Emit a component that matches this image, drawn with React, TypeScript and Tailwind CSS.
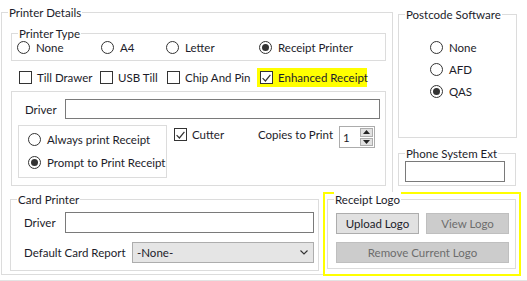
import React from 'react';

const Group: React.FC<{ title?: string; className?: string; children?: React.ReactNode }> = ({ title, className = '', children }) => (
  <div className={`relative border border-[#dcdcdc] ${className}`}>
    {title && (
      <span className="absolute left-[6px] top-[-8px] bg-white px-[1px] leading-[15px] whitespace-nowrap">{title}</span>
    )}
    {children}
  </div>
);

const Radio: React.FC<{ label: string; checked?: boolean }> = ({ label, checked }) => (
  <span className="flex items-center whitespace-nowrap">
    <span className="w-[13px] h-[13px] rounded-full border border-[#333333] bg-white flex items-center justify-center shrink-0">
      {checked && <span className="w-[7px] h-[7px] rounded-full bg-[#333333]" />}
    </span>
    <span className="ml-[6px]">{label}</span>
  </span>
);

const Check: React.FC<{ label: string; checked?: boolean }> = ({ label, checked }) => (
  <span className="flex items-center whitespace-nowrap">
    <span className="w-[13px] h-[13px] border border-[#333333] bg-white flex items-center justify-center shrink-0">
      {checked && (
        <svg width="9" height="8" viewBox="0 0 9 8">
          <path d="M0.6 4.2 L3.4 7 L8.4 0.8" stroke="#333333" strokeWidth="1.2" fill="none" />
        </svg>
      )}
    </span>
    <span className="ml-[5px]">{label}</span>
  </span>
);

const App: React.FC = () => {
  return (
    <div className="w-[527px] h-[281px] bg-white relative overflow-hidden text-[11.5px] leading-[15px] text-[#1c1c2a] font-['Lato',sans-serif]">
      <div className="flex items-start">
        {/* Printer Details */}
        <Group title="Printer Details" className="ml-[1px] mt-[12px] w-[392px] h-[263px]">
          <Group title="Printer Type" className="ml-[9px] mt-[20px] w-[375px] h-[28px]">
            <div className="flex mt-[6px] ml-[5px]">
              <div className="w-[84px]"><Radio label="None" /></div>
              <div className="w-[65px]"><Radio label="A4" /></div>
              <div className="w-[93px]"><Radio label="Letter" /></div>
              <Radio checked label="Receipt Printer" />
            </div>
          </Group>

          <div className="flex items-center h-[19px] mt-[7px] ml-[17px]">
            <div className="w-[81px]"><Check label="Till Drawer" /></div>
            <div className="w-[67px]"><Check label="USB Till" /></div>
            <div className="w-[90px]"><Check label="Chip And Pin" /></div>
            <div className="h-[19px] w-[110px] bg-[#ffff00] flex items-center pl-[3px]">
              <Check checked label="Enhanced Receipt" />
            </div>
          </div>

          <Group className="ml-[9px] mt-[4px] w-[375px] h-[95px]">
            <div className="flex items-center mt-[7px]">
              <span className="ml-[13px] w-[40px]">Driver</span>
              <div className="w-[315px] h-[20px] border border-[#7a7a7a] bg-white" />
            </div>
            <div className="flex items-start mt-[6px]">
              <div className="ml-[6px] w-[149px] h-[53px] border border-[#dcdcdc]">
                <div className="mt-[6px] ml-[9px]"><Radio label="Always print Receipt" /></div>
                <div className="mt-[8px] ml-[9px]"><Radio checked label="Prompt to Print Receipt" /></div>
              </div>
              <div className="ml-[7px] mt-[2px] w-[84px]"><Check checked label="Cutter" /></div>
              <span className="mt-[2px] w-[81px]">Copies to Print</span>
              <div className="mt-[1px] w-[36px] h-[22px] border border-[#acacac] bg-white flex">
                <span className="flex-1 pl-[3px] pt-[3px]">1</span>
                <div className="w-[13px] flex flex-col my-[1px] mr-[1px] gap-[1px]">
                  <div className="flex-1 bg-[#e1e1e1] border border-[#adadad] flex items-center justify-center">
                    <svg width="7" height="4" viewBox="0 0 7 4"><path d="M0 4 L3.5 0 L7 4 Z" fill="#222" /></svg>
                  </div>
                  <div className="flex-1 bg-[#e1e1e1] border border-[#adadad] flex items-center justify-center">
                    <svg width="7" height="4" viewBox="0 0 7 4"><path d="M0 0 L3.5 4 L7 0 Z" fill="#222" /></svg>
                  </div>
                </div>
              </div>
            </div>
          </Group>

          <Group title="Card Printer" className="ml-[8px] mt-[13px] w-[309px] h-[72px]">
            <div className="flex items-center mt-[12px]">
              <span className="ml-[13px] w-[41px]">Driver</span>
              <div className="w-[249px] h-[21px] border border-[#7a7a7a] bg-white" />
            </div>
            <div className="flex items-center mt-[9px]">
              <span className="ml-[13px] w-[108px] whitespace-nowrap">Default Card Report</span>
              <div className="w-[182px] h-[21px] border border-[#adadad] bg-[#e5e5e5] flex items-center justify-between pl-[4px] pr-[5px]">
                <span>-None-</span>
                <svg width="8" height="5" viewBox="0 0 8 5">
                  <path d="M0.5 0.5 L4 4 L7.5 0.5" stroke="#333" strokeWidth="1.1" fill="none" />
                </svg>
              </div>
            </div>
          </Group>
        </Group>

        {/* Right column */}
        <div className="ml-[5px] flex flex-col">
          <Group title="Postcode Software" className="mt-[14px] w-[119px] h-[124px]">
            <div className="mt-[25px] ml-[31px]"><Radio label="None" /></div>
            <div className="mt-[7px] ml-[31px]"><Radio label="AFD" /></div>
            <div className="mt-[7px] ml-[31px]"><Radio checked label="QAS" /></div>
          </Group>
          <Group title="Phone System Ext" className="mt-[15px] w-[118px] h-[33px]">
            <div className="ml-[6px] mt-[7px] w-[100px] h-[21px] border border-[#7a7a7a] bg-white" />
          </Group>
        </div>
      </div>

      <div className="mt-[5px] h-px bg-[#e3e3e3]" />

      {/* Receipt Logo, highlighted panel laid over the printer details box */}
      <div className="absolute left-[323px] top-[192px] w-[198px] h-[84px] border-2 border-[#ffff00] bg-white">
        <Group title="Receipt Logo" className="ml-[2px] mt-[5px] w-[189px] h-[70px]">
          <div className="flex gap-[7px] mt-[13px] ml-[8px]">
            <button className="w-[83px] h-[21px] bg-[#e1e1e1] border border-[#adadad] flex items-center justify-center">Upload Logo</button>
            <button className="w-[83px] h-[21px] bg-[#cccccc] border border-[#bfbfbf] text-[#6d6d6d] flex items-center justify-center">View Logo</button>
          </div>
          <button className="mt-[8px] ml-[8px] w-[173px] h-[21px] bg-[#cccccc] border border-[#bfbfbf] text-[#6d6d6d] flex items-center justify-center">Remove Current Logo</button>
        </Group>
      </div>
    </div>
  );
};

export default App;
